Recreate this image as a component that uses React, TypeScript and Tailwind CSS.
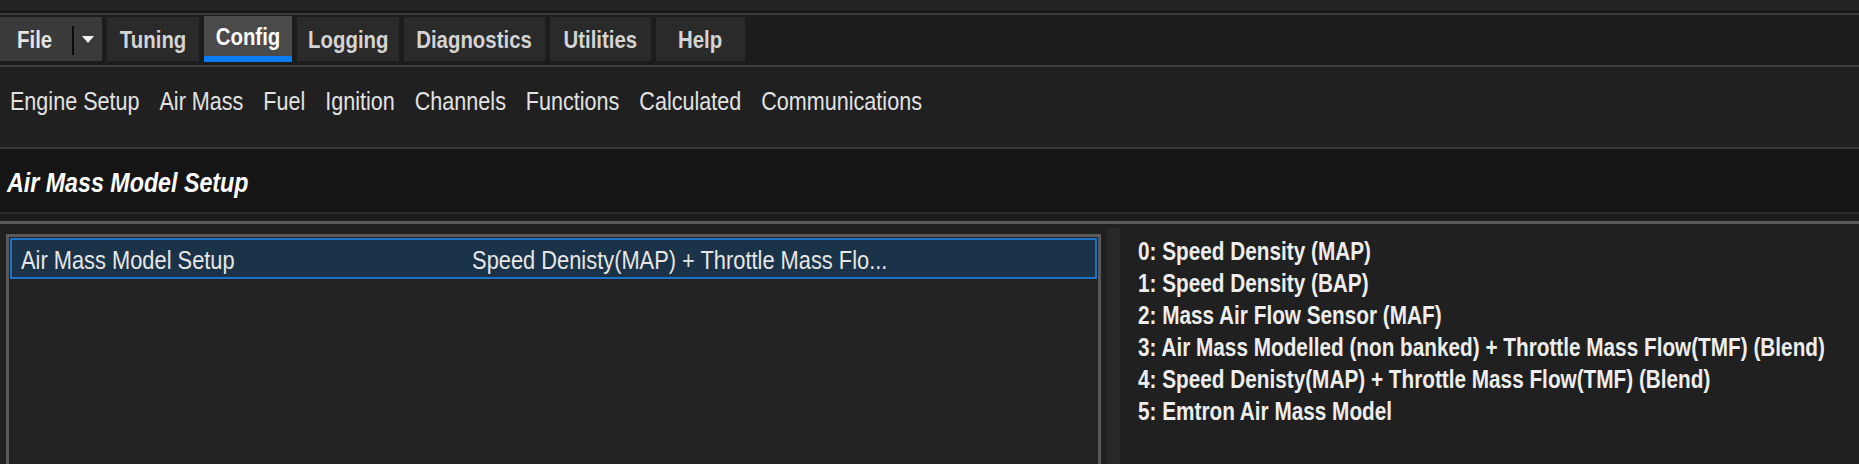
const tabs = [
  { label: "Tuning", w: "w-[92px]" },
  { label: "Config", w: "w-[88px]", active: true },
  { label: "Logging", w: "w-[102px]" },
  { label: "Diagnostics", w: "w-[141px]" },
  { label: "Utilities", w: "w-[101px]" },
  { label: "Help", w: "w-[89px]" },
];

const subMenu = [
  "Engine Setup",
  "Air Mass",
  "Fuel",
  "Ignition",
  "Channels",
  "Functions",
  "Calculated",
  "Communications",
];

const options = [
  "0: Speed Density (MAP)",
  "1: Speed Density (BAP)",
  "2: Mass Air Flow Sensor (MAF)",
  "3: Air Mass Modelled (non banked) + Throttle Mass Flow(TMF) (Blend)",
  "4: Speed Denisty(MAP) + Throttle Mass Flow(TMF) (Blend)",
  "5: Emtron Air Mass Model",
];

function FileButton() {
  return (
    <div className="h-[44px] w-[102px] bg-[#3a3a3a] flex items-center pt-[2px]">
      <div className="pl-[17px] w-[72px]">
        <span className="inline-block origin-left scale-x-[0.85] text-[24px] leading-[30px] font-bold text-[#e4e4e4]">
          File
        </span>
      </div>
      <div className="w-[2px] h-[29px] bg-[#0c0c0c]" />
      <svg width="12" height="8" viewBox="0 0 12 8" className="ml-[8px]">
        <polygon points="0,0 12,0 6,7" fill="#f2f2f2" />
      </svg>
    </div>
  );
}

function Tab({ label, w, active }: { label: string; w: string; active?: boolean }) {
  if (active) {
    return (
      <div className={`${w} h-[46px] -mt-[1px] flex flex-col`}>
        <div className="flex-1 bg-[#4a4a4a] flex items-center justify-center pt-[2px]">
          <span className="inline-block whitespace-nowrap scale-x-[0.85] text-[24px] leading-[30px] font-bold text-white">
            {label}
          </span>
        </div>
        <div className="h-[6px] bg-[#0a7cf2]" />
      </div>
    );
  }
  return (
    <div className={`${w} h-[44px] bg-[#2a2a2a] flex items-center justify-center pt-[2px]`}>
      <span className="inline-block whitespace-nowrap scale-x-[0.85] text-[24px] leading-[30px] font-bold text-[#d4d4d4]">
        {label}
      </span>
    </div>
  );
}

export default function App() {
  return (
    <div className="h-[464px] w-[1859px] overflow-hidden bg-[#202020] flex flex-col font-['Liberation_Sans',Arial,sans-serif]">
      {/* window title strip */}
      <div className="h-[11px] bg-[#232323]" />
      <div className="h-[2px] bg-[#151515]" />
      <div className="h-[2px] bg-[#3a3e42]" />

      {/* ribbon tabs */}
      <div className="h-[50px] bg-[#1c1c1c] flex items-start gap-[5px] pt-[2px]">
        <FileButton />
        {tabs.map((t) => (
          <Tab key={t.label} {...t} />
        ))}
      </div>
      <div className="h-[2px] bg-[#3d3d3d]" />

      {/* config sub menu */}
      <div className="h-[80px] bg-[#202020] pt-[19px] overflow-hidden">
        <div className="flex origin-left scale-x-[0.83] gap-[24px] pl-[12px] whitespace-nowrap text-[26px] leading-[30px] text-[#e2e2e2]">
          {subMenu.map((s) => (
            <span key={s}>{s}</span>
          ))}
        </div>
      </div>
      <div className="h-[2px] bg-[#383838]" />

      {/* page title */}
      <div className="h-[63px] bg-[#151515] pl-[7px] pt-[18px]">
        <div className="origin-left scale-x-[0.83] whitespace-nowrap text-[28px] leading-[32px] font-bold italic text-white">
          Air Mass Model Setup
        </div>
      </div>
      <div className="h-[2px] bg-[#2e2e2e]" />
      <div className="h-[7px] bg-[#1c1c1c]" />
      <div className="h-[3px] bg-[#595959]" />

      {/* settings area */}
      <div className="flex-1 min-h-0 flex">
        <div className="pl-[6px] pt-[10px] flex">
          <div className="w-[1095px] border-x-[3px] border-t-[3px] border-[#5a5a5a] bg-[#222222]">
            <div className="mt-[1px] mx-[1px] h-[41px] border-2 border-[#1f72c6] bg-[#1b3348] flex items-center pl-[9px] pt-[2px] overflow-hidden">
              <div className="flex origin-left scale-x-[0.84] whitespace-nowrap text-[26px] leading-[30px] text-[#e6e6e6]">
                <span className="w-[537px]">Air Mass Model Setup</span>
                <span>Speed Denisty(MAP) + Throttle Mass Flo...</span>
              </div>
            </div>
          </div>
        </div>
        <div className="ml-[6px] mt-[4px] w-[13px] bg-[#282828]" />
        <div className="flex-1 min-w-0 pl-[18px] pt-[11px]">
          <div className="flex flex-col origin-left scale-x-[0.83] whitespace-nowrap text-[25px] leading-[32px] font-bold text-[#ededed]">
            {options.map((o) => (
              <span key={o}>{o}</span>
            ))}
          </div>
        </div>
      </div>
    </div>
  );
}
